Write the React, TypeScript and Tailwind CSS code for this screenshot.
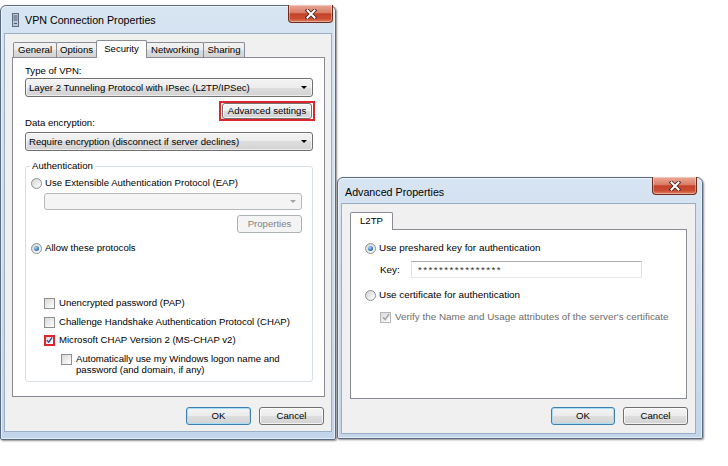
import React from "react";

const btnBg =
  "bg-[linear-gradient(#f3f3f3_0%,#ececec_50%,#dedede_50%,#d2d2d2_100%)]";

function CloseButton() {
  return (
    <div className="-mt-px -mr-px w-[45px] h-[18px] rounded-b-[4px] border border-t-0 border-[#6e2b20] bg-[linear-gradient(#eaa998_0%,#d97d67_45%,#c4432a_52%,#c94d31_80%,#e28262_100%)] shadow-[inset_0_0_0_1px_rgba(255,255,255,0.35)] flex items-center justify-center">
      <svg width="12" height="10" viewBox="0 0 12 10">
        <path d="M2.5 1.5 L9.5 8.5 M9.5 1.5 L2.5 8.5" stroke="#4b2722" strokeWidth="3.8" strokeLinecap="square" />
        <path d="M2.5 1.5 L9.5 8.5 M9.5 1.5 L2.5 8.5" stroke="#ffffff" strokeWidth="2" strokeLinecap="square" />
      </svg>
    </div>
  );
}

function VpnIcon() {
  return (
    <svg width="7" height="14" viewBox="0 0 7 14" className="shrink-0">
      <rect x="0.5" y="0.5" width="6" height="13" fill="#b9c7d7" stroke="#5d6d80" />
      <path d="M1.5 3h4M1.5 5h4M1.5 7h4" stroke="#4b5a6b" strokeWidth="1" />
      <rect x="2" y="10" width="3" height="1" fill="#4b5a6b" />
    </svg>
  );
}

function Radio({ checked }: { checked?: boolean }) {
  return (
    <span className="w-[11px] h-[11px] shrink-0 rounded-full border border-[#8e8f8f] bg-[linear-gradient(135deg,#d4d4d4,#ffffff)] flex items-center justify-center">
      {checked && (
        <span className="w-[5px] h-[5px] rounded-full bg-[radial-gradient(circle_at_35%_35%,#a8dcfa,#1d5fab_75%)]" />
      )}
    </span>
  );
}

function Check({ checked, disabled, red }: { checked?: boolean; disabled?: boolean; red?: boolean }) {
  const border = red
    ? "border-2 border-[#e0242b]"
    : disabled
    ? "border border-[#b6b6b6]"
    : "border border-[#8e8f8f]";
  return (
    <span
      className={`w-[11px] h-[11px] shrink-0 flex items-center justify-center bg-[linear-gradient(135deg,#d8d8d8,#ffffff)] ${border}`}
    >
      {checked && (
        <svg width="8" height="8" viewBox="0 0 8 8">
          <path
            d="M1 4.2 L3.2 6.5 L7 1"
            fill="none"
            stroke={disabled ? "#a8a8a8" : "#2d4b8c"}
            strokeWidth="1.5"
          />
        </svg>
      )}
    </span>
  );
}

function Combo({ text }: { text: string }) {
  return (
    <div className={`h-[19px] rounded-[3px] border border-[#707070] ${btnBg} shadow-[inset_0_0_0_1px_rgba(255,255,255,0.6)] flex items-center pl-[3px] pr-[5px]`}>
      <span className="flex-1 truncate">{text}</span>
      <svg width="6" height="3" viewBox="0 0 6 3">
        <path d="M0 0h6L3 3z" fill="#000" />
      </svg>
    </div>
  );
}

function Btn({
  children,
  def,
  disabled,
  h = "h-[18px]",
  className = "",
}: {
  children: React.ReactNode;
  def?: boolean;
  disabled?: boolean;
  h?: string;
  className?: string;
}) {
  const look = disabled
    ? "border-[#adb2b5] bg-[#f4f4f4] text-[#838383]"
    : def
    ? `border-[#3c7fb1] ${btnBg} shadow-[inset_0_0_0_1px_#a9dcf6]`
    : `border-[#707070] ${btnBg} shadow-[inset_0_0_0_1px_rgba(255,255,255,0.7)]`;
  return (
    <div className={`${h} rounded-[3px] border flex items-center justify-center ${look} ${className}`}>
      {children}
    </div>
  );
}

function Tab({ children, active, className = "" }: { children: React.ReactNode; active?: boolean; className?: string }) {
  return active ? (
    <div className={`relative z-10 -ml-px h-[18px] -mb-px border border-b-0 border-[#898c95] rounded-t-[2px] bg-white flex items-start justify-center pt-[2px] ${className}`}>
      {children}
    </div>
  ) : (
    <div className={`-ml-px first:ml-0 h-[15px] border border-b-0 border-[#898c95] rounded-t-[2px] ${btnBg} flex items-center justify-center ${className}`}>
      {children}
    </div>
  );
}

const frame =
  "shrink-0 flex flex-col rounded-t-[6px] rounded-b-[2px] border border-[#5b6b7f] bg-[linear-gradient(#d7e4f2,#c2d5ea)] shadow-[1px_1px_2px_rgba(0,0,0,0.45),inset_0_0_0_1px_rgba(255,255,255,0.55)]";

export default function App() {
  return (
    <div className="w-[728px] h-[466px] bg-white flex items-start pt-[5px] font-['Liberation_Sans',Arial,sans-serif] text-[9.6px] leading-[12px] text-black">
      {/* VPN Connection Properties */}
      <div className={`w-[336px] h-[435px] px-[3px] pb-[7px] ${frame}`}>
        <div className="h-[27px] flex items-start">
          <div className="h-full flex items-center pl-[8px] gap-[6px] text-[10.7px]">
            <VpnIcon />
            <span>VPN Connection Properties</span>
          </div>
          <div className="ml-auto">
            <CloseButton />
          </div>
        </div>
        <div className="flex-1 flex flex-col border border-[#9aafc6] bg-[#f0f0f0] pt-[6px] pl-[7px] pr-[6px]">
          <div className="flex items-end h-[17px] pl-px">
            <Tab className="w-[44px]">General</Tab>
            <Tab className="w-[41px]">Options</Tab>
            <Tab active className="w-[51px]">Security</Tab>
            <Tab className="w-[58px]">Networking</Tab>
            <Tab className="w-[42px]">Sharing</Tab>
          </div>
          <div className="h-[340px] border border-[#898c95] bg-white flex flex-col pl-[12px] pr-[11px]">
            <div className="mt-[7px] h-[12px]">Type of VPN:</div>
            <div className="mt-px">
              <Combo text="Layer 2 Tunneling Protocol with IPsec (L2TP/IPSec)" />
            </div>
            <div className="mt-[4px] self-end -mr-[2px] border-2 border-[#e0242b] px-px">
              <Btn h="h-[16px]" className="w-[90px]">Advanced settings</Btn>
            </div>
            <div className="-mt-[4px] h-[12px] self-start">Data encryption:</div>
            <div className="mt-[3px]">
              <Combo text="Require encryption (disconnect if server declines)" />
            </div>
            <fieldset className="mt-[9px] h-[222px] border border-[#d5dfe5] rounded-[3px]">
              <legend className="ml-[4px] px-[2px] leading-[12px]">Authentication</legend>
              <div className="flex flex-col pl-[5px]">
                <div className="mt-[4px] h-[14px] flex items-center gap-[3px]">
                  <Radio />
                  <span>Use Extensible Authentication Protocol (EAP)</span>
                </div>
                <div className="mt-[3px] ml-[13px] mr-[10px] h-[17px] rounded-[3px] border border-[#b5b9bc] bg-[#f4f4f4] flex items-center justify-end pr-[5px]">
                  <svg width="6" height="3" viewBox="0 0 6 3">
                    <path d="M0 0h6L3 3z" fill="#a3a3a3" />
                  </svg>
                </div>
                <Btn disabled className="mt-[5px] mr-[10px] self-end w-[65px]">
                  Properties
                </Btn>
                <div className="mt-[8px] h-[14px] flex items-center gap-[3px]">
                  <Radio checked />
                  <span>Allow these protocols</span>
                </div>
                <div className="mt-[41px] ml-[13px] h-[14px] flex items-center gap-[4px]">
                  <Check />
                  <span>Unencrypted password (PAP)</span>
                </div>
                <div className="mt-[5px] ml-[13px] h-[14px] flex items-center gap-[4px]">
                  <Check />
                  <span>Challenge Handshake Authentication Protocol (CHAP)</span>
                </div>
                <div className="mt-[4px] ml-[13px] h-[14px] flex items-center gap-[4px]">
                  <Check checked red />
                  <span>Microsoft CHAP Version 2 (MS-CHAP v2)</span>
                </div>
                <div className="mt-[7px] ml-[30px] flex items-start gap-[4px]">
                  <Check />
                  <span className="leading-[10.5px]">
                    Automatically use my Windows logon name and
                    <br />
                    password (and domain, if any)
                  </span>
                </div>
              </div>
            </fieldset>
          </div>
          <div className="mt-[10px] flex justify-end gap-[8px] pr-px">
            <Btn def className="w-[65px]">OK</Btn>
            <Btn className="w-[65px]">Cancel</Btn>
          </div>
        </div>
      </div>

      {/* Advanced Properties */}
      <div className={`ml-px mt-[172px] w-[366px] h-[262px] pl-[3px] pr-[6px] pb-[4px] ${frame}`}>
        <div className="h-[25px] flex items-start">
          <div className="h-full flex items-center pl-[4px] pt-[2px] text-[10.7px]">Advanced Properties</div>
          <div className="ml-auto">
            <CloseButton />
          </div>
        </div>
        <div className="flex-1 flex flex-col border border-[#9aafc6] bg-[#f0f0f0] pt-[8px] px-[8px]">
          <div className="flex items-end h-[17px]">
            <Tab active className="ml-0 w-[43px] mb-[-1px]">L2TP</Tab>
          </div>
          <div className="h-[170px] border border-[#898c95] bg-white flex flex-col text-[9.9px]">
            <div className="mt-[11px] pl-[14px] h-[14px] flex items-center gap-[3px]">
              <Radio checked />
              <span>Use preshared key for authentication</span>
            </div>
            <div className="mt-[6px] pl-[29px] h-[17px] flex items-center">
              <span className="w-[31px]">Key:</span>
              <div className="w-[231px] h-full border border-[#abadb3] border-l-[#dbdfe6] border-r-[#dbdfe6] border-b-[#e3e9ef] bg-white flex items-center pl-[6px] tracking-[1.4px] text-[#333]">
                ****************
              </div>
            </div>
            <div className="mt-[10px] pl-[14px] h-[14px] flex items-center gap-[3px]">
              <Radio />
              <span>Use certificate for authentication</span>
            </div>
            <div className="mt-[8px] pl-[29px] h-[14px] flex items-center gap-[4px] text-[#6d6d6d]">
              <Check checked disabled />
              <span>Verify the Name and Usage attributes of the server's certificate</span>
            </div>
          </div>
          <div className="mt-[8px] -mr-px flex justify-end gap-[8px]">
            <Btn def className="w-[64px]">OK</Btn>
            <Btn className="w-[65px]">Cancel</Btn>
          </div>
        </div>
      </div>
    </div>
  );
}
